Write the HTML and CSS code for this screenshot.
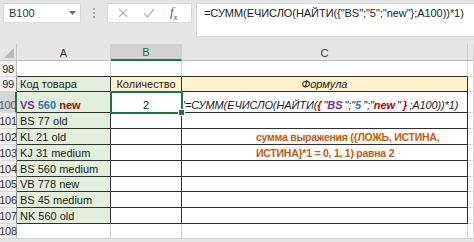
FILE: index.html
```html
<!DOCTYPE html>
<html lang="ru">
<head>
    <meta charset="UTF-8">
    <title>СУММ ЕЧИСЛО НАЙТИ</title>
    <link rel="stylesheet" href="styles.css">
</head>
<body>

    <!-- Formula bar -->
    <div class="toolbar">
        <div class="namebox">
            <span>B100</span>
            <svg class="arrow" width="7" height="4" viewBox="0 0 7 4"><polygon points="0,0 7,0 3.5,4" fill="#6b6b6b"/></svg>
        </div>
        <div class="grip"><i></i><i></i><i></i></div>
        <div class="fxbox">
            <svg width="10" height="10" viewBox="0 0 10 10"><path d="M1 1 L9 9 M9 1 L1 9" stroke="#b5b5b5" stroke-width="1.2"/></svg>
            <svg width="12" height="10" viewBox="0 0 12 10"><path d="M1 5.5 L4.5 9 L11 1" stroke="#b5b5b5" stroke-width="1.2" fill="none"/></svg>
            <span class="fx">f<sub>x</sub></span>
        </div>
        <div class="formula">=СУММ(ЕЧИСЛО(НАЙТИ({"BS";"5";"new"};A100))*1)</div>
    </div>

    <!-- Sheet -->
    <div class="sheet">
        <div class="corner"><svg width="10" height="10" viewBox="0 0 10 10"><polygon points="10,0 10,10 0,10" fill="#b8b8b8"/></svg></div>
        <div class="head">A</div>
        <div class="head active">B</div>
        <div class="head">C</div>
        <div class="head"></div>

        <div class="rh">98</div>
        <div class="cell edge"></div>
        <div class="cell edge"></div>
        <div class="cell edge"></div>
        <div class="cell"></div>

        <div class="rh data">99</div>
        <div class="cell d g">Код товара</div>
        <div class="cell d y center">Количество</div>
        <div class="cell d y center it">Формула</div>
        <div class="cell"></div>

        <div class="rh data active">100</div>
        <div class="cell d g b"><span class="purple">VS</span>&nbsp;<span class="blue">560</span>&nbsp;<span class="red">new</span></div>
        <div class="cell d center sel">2</div>
        <div class="cell d it formula-text">'=СУММ(ЕЧИСЛО(НАЙТИ(<b class="red">{</b>&#8201;"<b class="purple">BS</b>&#8201;";"<b class="blue">5</b>&#8201;";"<b class="red">new</b>&#8201;"&#8201;<b class="red">}</b>&#8201;;A100))*1)</div>
        <div class="cell"></div>

        <div class="rh data">101</div>
        <div class="cell d g">BS 77 old</div>
        <div class="cell d"></div>
        <div class="cell d"></div>
        <div class="cell"></div>

        <div class="rh data">102</div>
        <div class="cell d g">KL 21 old</div>
        <div class="cell d"></div>
        <div class="cell d note">сумма выражения ({ЛОЖЬ, ИСТИНА,</div>
        <div class="cell"></div>

        <div class="rh data">103</div>
        <div class="cell d g">KJ 31 medium</div>
        <div class="cell d"></div>
        <div class="cell d note">ИСТИНА}*1 = 0, 1, 1) равна 2</div>
        <div class="cell"></div>

        <div class="rh data">104</div>
        <div class="cell d g">BS 560 medium</div>
        <div class="cell d"></div>
        <div class="cell d"></div>
        <div class="cell"></div>

        <div class="rh data">105</div>
        <div class="cell d g">VB 778 new</div>
        <div class="cell d"></div>
        <div class="cell d"></div>
        <div class="cell"></div>

        <div class="rh data">106</div>
        <div class="cell d g">BS 45 medium</div>
        <div class="cell d"></div>
        <div class="cell d"></div>
        <div class="cell"></div>

        <div class="rh data">107</div>
        <div class="cell d g">NK 560 old</div>
        <div class="cell d"></div>
        <div class="cell d"></div>
        <div class="cell"></div>

        <div class="rh">108</div>
        <div class="cell"></div>
        <div class="cell"></div>
        <div class="cell"></div>
        <div class="cell"></div>
    </div>

    <div class="bottom"></div>

</body>
</html>
```

FILE: styles.css
```css
body {
    margin: 0;
    padding: 0;
    width: 474px;
    height: 242px;
    overflow: hidden;
    font-family: "Liberation Sans", Arial, sans-serif;
    font-size: 11px;
    color: #1a1a1a;
    background-color: #e6e6e6;
}

/* Formula bar */
.toolbar {
    display: flex;
    align-items: flex-start;
    height: 44px;
    padding: 3px 0 0 3px;
    box-sizing: border-box;
}

.namebox {
    width: 78px;
    height: 20px;
    box-sizing: border-box;
    background: #fff;
    border: 1px solid #d9d9d9;
    display: flex;
    align-items: center;
    justify-content: space-between;
    padding: 0 4px 0 5px;
    color: #333;
}

.grip {
    width: 26px;
    height: 20px;
    display: flex;
    flex-direction: column;
    align-items: center;
    justify-content: center;
    gap: 2px;
}

.grip i {
    width: 2px;
    height: 2px;
    background: #a8a8a8;
}

.fxbox {
    width: 85px;
    height: 20px;
    box-sizing: border-box;
    background: #fff;
    border: 1px solid #d9d9d9;
    display: flex;
    align-items: center;
    justify-content: space-around;
    padding: 0 6px 0 3px;
}

.fx {
    font-family: "Liberation Serif", serif;
    font-style: italic;
    font-size: 13px;
    color: #555;
}

.fx sub {
    font-size: 9px;
}

.formula {
    margin-left: 4px;
    flex: 1;
    height: 34px;
    box-sizing: border-box;
    background: #fff;
    border: 1px solid #d9d9d9;
    border-right: none;
    padding: 3px 0 0 7px;
    white-space: nowrap;
    color: #222;
    letter-spacing: -0.05px;
}

/* Sheet grid */
.sheet {
    display: grid;
    grid-template-columns: 17px 94px 71px 286px 6px;
    grid-template-rows: 17px 16px 15px 21px 16px 16px 16px 16px 15px 16px 16px 15px;
    background: #fff;
}

.corner {
    background: #e6e6e6;
    border-right: 1px solid #c6c6c6;
    border-bottom: 1px solid #bdbdbd;
    display: flex;
    align-items: flex-end;
    justify-content: flex-end;
    padding: 0 2px 2px 0;
}

.head {
    background: #e6e6e6;
    border-right: 1px solid #cfcfcf;
    border-bottom: 1px solid #bdbdbd;
    display: flex;
    align-items: center;
    justify-content: center;
    color: #333;
    padding-top: 1px;
}

.head.active {
    background: #d2d2d2;
    color: #217346;
    border-bottom: 2px solid #217346;
}

.rh {
    background: #f1f1f1;
    border-right: 1px solid #bdbdbd;
    border-bottom: 1px solid #d8d8d8;
    display: flex;
    align-items: flex-end;
    justify-content: center;
    color: #333;
    line-height: 14px;
    letter-spacing: -0.3px;
}

.rh.data {
    border-right-color: #8f8f8f;
}

.rh.active {
    background: #d6d6d6;
    color: #555;
    border-right: 2px solid #217346;
}

.cell {
    position: relative;
    border-right: 1px solid #d4d4d4;
    border-bottom: 1px solid #d4d4d4;
    display: flex;
    align-items: flex-end;
    padding: 0 0 0 3px;
    line-height: 14px;
    white-space: nowrap;
}

.cell.edge {
    border-bottom-color: #2f2f2f;
}

.cell.d {
    border-right-color: #2f2f2f;
    border-bottom-color: #2f2f2f;
}

.g {
    background: #e2efda;
}

.y {
    background: #fff2cc;
}

.center {
    justify-content: center;
    padding: 0;
}

.it {
    font-style: italic;
}

.b {
    font-weight: bold;
}

.purple {
    color: #7030a0;
}

.blue {
    color: #2e75b6;
}

.red {
    color: #c00000;
}

.formula-text {
    padding-left: 1px;
    letter-spacing: -0.1px;
}

.note {
    padding-left: 74px;
    font-size: 10.5px;
    letter-spacing: -0.25px;
    font-weight: bold;
    color: #c55a11;
}

/* Selected cell */
.sel {
    outline: 2px solid #217346;
    outline-offset: -1px;
    z-index: 1;
}

.sel::after {
    content: "";
    position: absolute;
    right: -4px;
    bottom: -4px;
    width: 5px;
    height: 5px;
    background: #217346;
    border: 1px solid #fff;
}

.bottom {
    height: 3px;
    background: #e6e6e6;
}
```
